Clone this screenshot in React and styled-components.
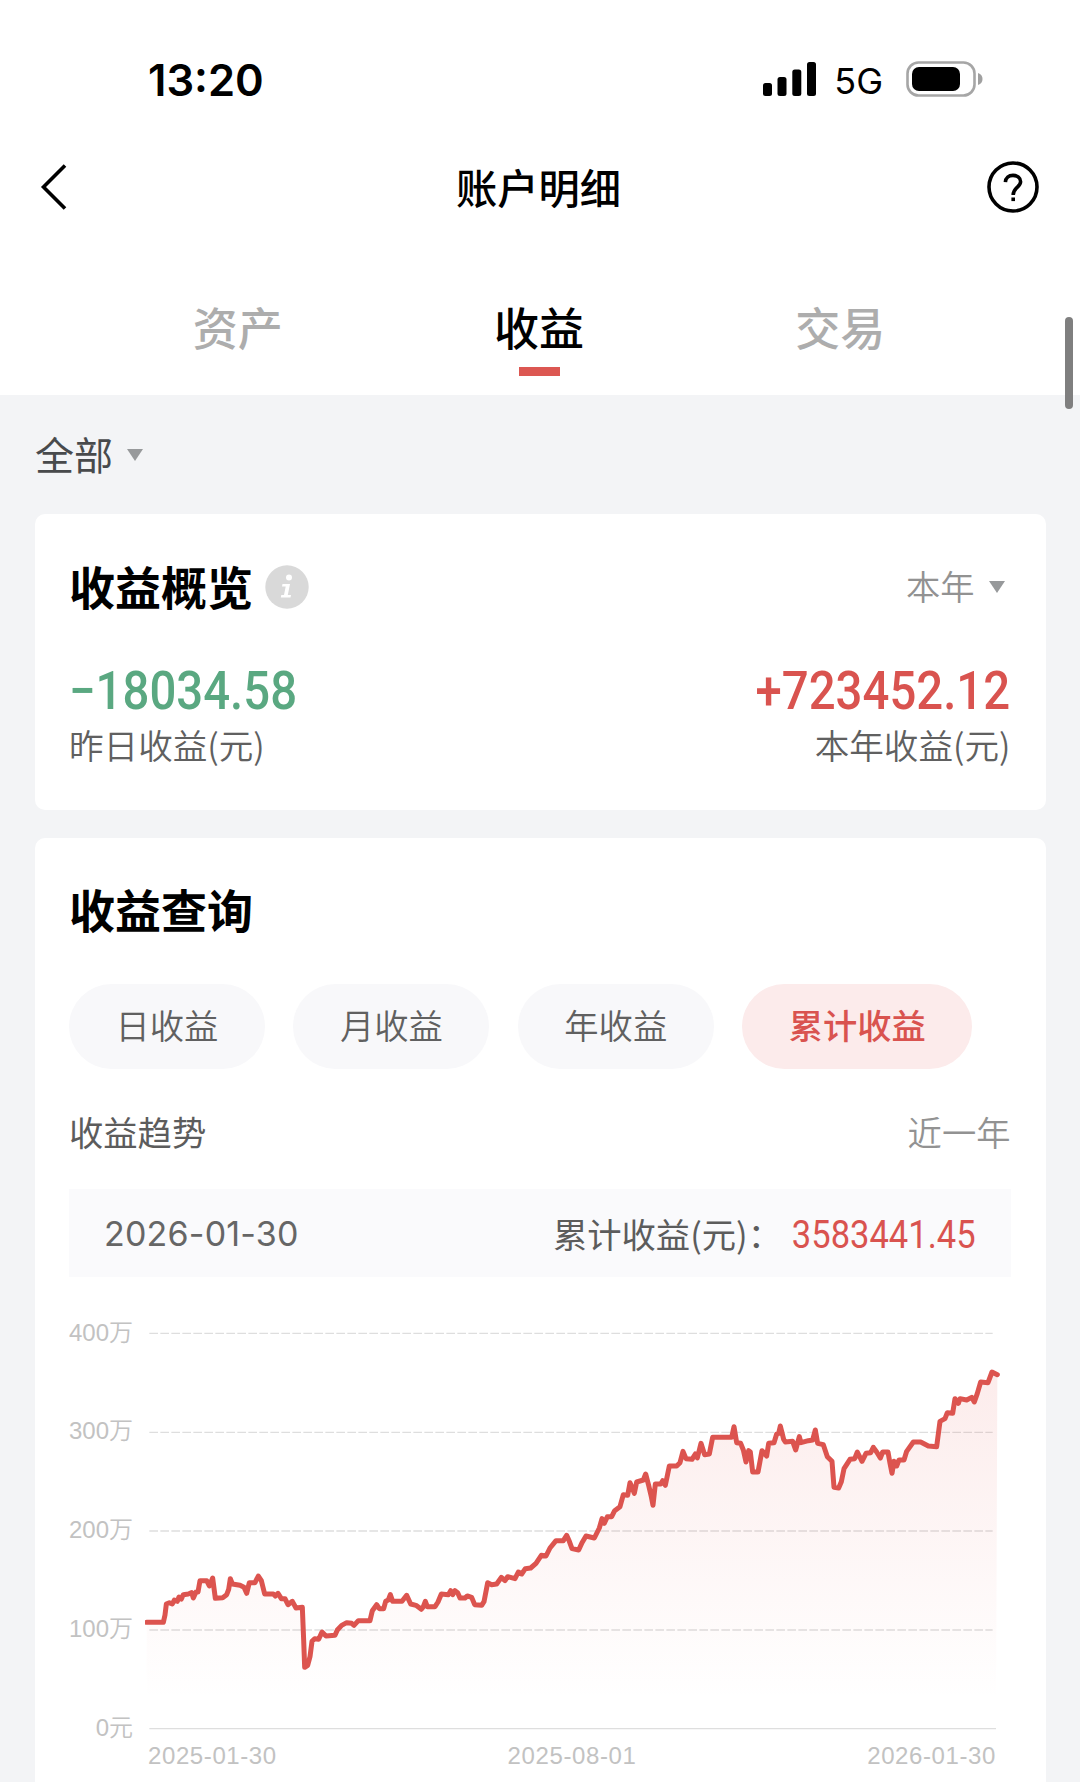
import React, { useState } from 'react';
import styled, { createGlobalStyle } from 'styled-components';

const tabs = ['资产', '收益', '交易'];
const periods = ['日收益', '月收益', '年收益', '累计收益'];
const yLabels = ['400万', '300万', '200万', '100万', '0元'];
const xLabels = ['2025-01-30', '2025-08-01', '2026-01-30'];
const gridLines = [100, 397, 693, 990];

// x,y pairs in the units of the chart viewBox
const trend = `320,967 370,967 375,945 379,912 388,908 397,912 403,900 412,904 417,891 424,897
430,884 445,882 455,878 460,894 468,876 474,876 480,842 500,842 508,858 518,834 526,895 548,893
560,884 566,868 571,836 577,852 600,856 612,862 620,880 628,848 645,848 655,828 664,842 674,882
700,882 706,888 714,880 724,896 735,896 744,914 757,904 768,924 787,922 791,1020 794,1102
803,1096 810,1070 816,1024 824,1016 836,1018 846,996 858,1008 885,1006 892,990 905,976 920,968
935,970 942,976 955,962 990,962 997,932 1010,914 1018,926 1031,926 1037,904 1045,900 1051,884
1058,904 1086,904 1100,886 1112,912 1128,916 1144,928 1150,920 1156,904 1162,920 1185,920
1194,906 1204,882 1225,884 1232,872 1238,884 1245,872 1253,878 1260,894 1275,894 1282,888
1295,892 1304,914 1325,916 1332,905 1343,848 1355,854 1370,852 1384,832 1395,842 1403,830
1425,836 1435,816 1445,822 1456,806 1472,804 1488,790 1504,766 1518,768 1530,744 1548,722
1570,722 1580,706 1588,724 1596,746 1616,750 1626,728 1638,708 1663,714 1678,684 1686,656
1693,670 1702,650 1715,650 1724,632 1740,620 1750,584 1763,586 1770,548 1783,580 1790,546
1810,540 1817,522 1826,556 1834,590 1839,616 1846,552 1862,552 1868,542 1876,556 1888,498
1910,498 1920,488 1929,454 1938,476 1956,478 1966,462 1972,474 1983,430 1994,464 2008,462
2018,412 2075,412 2082,380 2090,428 2102,430 2110,450 2118,486 2126,452 2131,456 2138,516
2154,516 2166,452 2180,468 2186,430 2202,428 2210,402 2216,400 2221,378 2231,418 2236,426
2258,424 2267,450 2278,410 2283,428 2305,422 2318,420 2326,390 2333,430 2350,434 2362,470
2376,484 2382,562 2396,564 2404,545 2412,506 2430,478 2444,476 2452,456 2466,484 2478,460
2492,458 2500,442 2510,456 2521,474 2528,456 2544,456 2550,490 2556,520 2562,484 2570,498
2577,480 2592,480 2600,454 2620,426 2642,426 2665,438 2690,440 2700,364 2715,356 2722,338
2738,340 2745,296 2755,310 2760,296 2780,300 2795,292 2803,306 2812,280 2822,246 2844,248
2856,216 2872,224`;

function App() {
  const [tab, setTab] = useState('收益');
  const [period, setPeriod] = useState('累计收益');

  return (
    <Page>
      <GlobalStyle />
      <StatusBar>
        <Time>13:20</Time>
        <StatusIcons>
          <svg width="53" height="34" viewBox="0 0 53 34">
            <rect x="0" y="21" width="9" height="13" rx="2.5" />
            <rect x="14.5" y="15" width="9" height="19" rx="2.5" />
            <rect x="29.3" y="7.5" width="9" height="26.5" rx="2.5" />
            <rect x="44" y="0" width="9" height="34" rx="2.5" />
          </svg>
          <Network>5G</Network>
          <svg width="77" height="36" viewBox="0 0 77 36">
            <rect x="1.5" y="1.5" width="67" height="33" rx="11" fill="none" stroke="#a6a6a6" strokeWidth="2.6" />
            <rect x="6" y="6" width="48" height="24" rx="7" />
            <path d="M72 12 q4.5 1.5 4.5 6 t-4.5 6 z" fill="#a0a0a0" />
          </svg>
        </StatusIcons>
      </StatusBar>

      <Header>
        <IconButton aria-label="返回">
          <svg width="28" height="48" viewBox="0 0 28 48" fill="none" stroke="#000" strokeWidth="3.6">
            <path d="M25 2.5 L3.5 24 L25 45.5" />
          </svg>
        </IconButton>
        <Title>账户明细</Title>
        <IconButton aria-label="帮助">
          <svg width="52" height="52" viewBox="0 0 52 52" fill="none" stroke="#000" strokeWidth="3.6">
            <circle cx="26" cy="26" r="24" />
            <path d="M18.4 21.2 C18.6 16.6 21.8 14.4 26 14.4 C30.4 14.4 33.6 17 33.6 20.8 C33.6 26 26.2 26.6 26.2 34" />
            <path d="M26.2 36.5 v3.6" />
          </svg>
        </IconButton>
      </Header>

      <Tabs>
        {tabs.map((name) => (
          <Tab key={name} $active={name === tab} onClick={() => setTab(name)}>{name}</Tab>
        ))}
      </Tabs>

      <Filter>
        全部
        <Caret />
      </Filter>

      <Overview>
        <CardHead>
          <CardTitle>收益概览</CardTitle>
          <Info width="44" height="44" viewBox="0 0 44 44">
            <circle cx="22" cy="22" r="21.7" fill="#d9d9d9" />
            <circle cx="24" cy="12.5" r="3" fill="#fff" />
            <path d="M17.5 19 H25 L22.8 30 H26 L25.5 32.5 H15.8 L16.3 30 H19 L20.7 21.5 H17 Z" fill="#fff" />
          </Info>
          <Range>
            本年
            <Caret $low />
          </Range>
        </CardHead>
        <Figures>
          <Figure>
            <Amount $color="#5aa881">−18034.58</Amount>
            <Label>昨日收益(元)</Label>
          </Figure>
          <Figure $right>
            <Amount $color="#d9534f" $right>+723452.12</Amount>
            <Label>本年收益(元)</Label>
          </Figure>
        </Figures>
      </Overview>

      <Query>
        <CardTitle>收益查询</CardTitle>
        <Pills>
          {periods.map((name) => (
            <Pill key={name} $active={name === period} onClick={() => setPeriod(name)}>{name}</Pill>
          ))}
        </Pills>
        <TrendHead>
          <TrendTitle>收益趋势</TrendTitle>
          <TrendRange>近一年</TrendRange>
        </TrendHead>
        <Selected>
          <SelectedDate>2026-01-30</SelectedDate>
          <SelectedLabel>累计收益(元)：</SelectedLabel>
          <SelectedValue>3583441.45</SelectedValue>
        </Selected>
        <Chart>
          <YAxis>
            {yLabels.map((label) => <span key={label}>{label}</span>)}
          </YAxis>
          <Plot viewBox="315 60 2583 1242">
            <defs>
              <linearGradient id="fade" gradientUnits="userSpaceOnUse" x1="0" y1="210" x2="0" y2="1200">
                <stop offset="0" stopColor="#e4504a" stopOpacity="0.11" />
                <stop offset="1" stopColor="#e4504a" stopOpacity="0" />
              </linearGradient>
            </defs>
            {gridLines.map((y) => (
              <line key={y} x1="328" x2="2858" y1={y} y2={y} stroke="#dedede" strokeWidth="4" strokeDasharray="26 7" />
            ))}
            <line x1="328" x2="2868" y1="1286" y2="1286" stroke="#dedede" strokeWidth="4" />
            <polygon points={`320,1286 ${trend} 2868,1286`} fill="url(#fade)" />
            <polyline points={trend} fill="none" stroke="#dc544f" strokeWidth="15" strokeLinejoin="round" strokeLinecap="round" />
          </Plot>
          <XAxis>
            {xLabels.map((label) => <span key={label}>{label}</span>)}
          </XAxis>
        </Chart>
      </Query>
      <ScrollThumb />
    </Page>
  );
}

export default App;

const GlobalStyle = createGlobalStyle`
  body {
    margin: 0;
    background: #f3f4f6;
  }

  button {
    border: 0;
    padding: 0;
    background: none;
    font: inherit;
  }

  svg {
    display: block;
  }
`

const Page = styled.div`
  position: relative;
  width: 1080px;
  height: 1782px;
  overflow: hidden;
  background: #f3f4f6;
  font-family: "Noto Sans CJK SC", sans-serif;
  color: #000;
`

const StatusBar = styled.div`
  box-sizing: border-box;
  height: 118px;
  padding: 40px 97px 0 148px;
  display: flex;
  align-items: center;
  justify-content: space-between;
  background: #fff;
`

const Time = styled.div`
  font: 600 43.5px/60px Inter, sans-serif;
  padding-top: 2px;
`

const StatusIcons = styled.div`
  display: flex;
  align-items: center;
`

const Network = styled.div`
  font: 400 36px/50px Inter, sans-serif;
  margin: 4px 23px 0 18px;
`

const Header = styled.div`
  box-sizing: border-box;
  height: 138px;
  padding: 0 41px 0 40px;
  display: flex;
  align-items: center;
  justify-content: space-between;
  background: #fff;
`

const IconButton = styled.button`
  width: 52px;
  display: flex;
`

const Title = styled.div`
  font-size: 41.3px;
  line-height: 60px;
  font-weight: 500;
  padding: 0 2px 3px 0;
`

const Tabs = styled.div`
  box-sizing: border-box;
  height: 139px;
  padding: 41px 89px 0 87px;
  display: flex;
  background: #fff;
`

const Tab = styled.button`
  flex: 1;
  display: flex;
  flex-direction: column;
  align-items: center;
  font-size: 45px;
  line-height: 60px;
  font-weight: 500;
  color: ${(props) => (props.$active ? '#000' : '#adadad')};

  &::after {
    content: '';
    width: 41px;
    height: 9px;
    margin: 10px 0 0 2px;
    background: ${(props) => (props.$active ? '#dc5752' : 'transparent')};
  }
`

const Filter = styled.div`
  height: 119px;
  padding-left: 35px;
  display: flex;
  align-items: center;
  gap: 14px;
  font-size: 39px;
  line-height: 56px;
  color: #484a4c;
  box-sizing: border-box;
  padding-bottom: 3px;
`

const Caret = styled.span`
  margin-top: ${(props) => (props.$low ? '4px' : '3px')};
  border: 8px solid transparent;
  border-top: 12px solid #97999b;
  border-bottom: 0;
`

const Card = styled.div`
  box-sizing: border-box;
  width: 1011px;
  margin-left: 34.5px;
  padding: 0 35px 0 34.5px;
  border-radius: 10px;
  background: #fff;
`

const Overview = styled(Card)`
  height: 296px;
  padding-top: 41px;
  margin-bottom: 28px;
`

const Query = styled(Card)`
  height: 960px;
  padding-top: 40px;
`

const CardHead = styled.div`
  display: flex;
  align-items: center;
`

const CardTitle = styled.div`
  font-size: 46px;
  line-height: 60px;
  font-weight: 700;
`

const Info = styled.svg`
  margin: 4px 0 0 12px;
`

const Range = styled.div`
  margin-left: auto;
  padding-right: 6px;
  display: flex;
  align-items: center;
  gap: 14px;
  font-size: 34.3px;
  font-weight: 350;
  color: #929292;
`

const Figures = styled.div`
  margin-top: 48px;
  display: flex;
  justify-content: space-between;
`

const Figure = styled.div`
  display: flex;
  flex-direction: column;
  align-items: ${(props) => (props.$right ? 'flex-end' : 'flex-start')};
`

const Amount = styled.div`
  font: 500 53px/56px Roboto, sans-serif;
  color: ${(props) => props.$color};
  transform: scaleX(0.893);
  transform-origin: ${(props) => (props.$right ? 'right' : 'left')};
`

const Label = styled.div`
  font-size: 34.6px;
  line-height: 50px;
  font-weight: 350;
  color: #606060;
`

const Pills = styled.div`
  margin-top: 46px;
  display: flex;
  gap: 28.5px;
`

const Pill = styled.button`
  height: 85px;
  padding: 0 46.5px 6px;
  border-radius: 43px;
  font-size: 34.3px;
  font-weight: ${(props) => (props.$active ? 500 : 350)};
  color: ${(props) => (props.$active ? '#d9534f' : '#606060')};
  background: ${(props) => (props.$active ? '#fcebeb' : '#f8f8fa')};
`

const TrendHead = styled.div`
  margin-top: 37px;
  display: flex;
  justify-content: space-between;
  font-size: 34.3px;
  line-height: 50px;
`

const TrendTitle = styled.div`
  color: #5c5c5c;
`

const TrendRange = styled.div`
  font-weight: 350;
  color: #929292;
`

const Selected = styled.div`
  height: 88px;
  margin-top: 33px;
  padding: 0 35px 0 35px;
  display: flex;
  align-items: center;
  background: #fafafc;
`

const SelectedDate = styled.div`
  font: 400 34px/50px Inter, sans-serif;
  letter-spacing: 0.2px;
  padding-top: 2px;
  color: #666;
`

const SelectedLabel = styled.div`
  margin-left: auto;
  margin-right: -14px;
  font-size: 34.3px;
  line-height: 50px;
  color: #5c5c5c;
`

const SelectedValue = styled.div`
  font: 400 39px/50px Roboto, sans-serif;
  padding-top: 4px;
  color: #d9534f;
  transform: scaleX(0.885);
  transform-origin: right;
`

const Chart = styled.div`
  margin-top: 42.5px;
  display: grid;
  grid-template-columns: 64px 861px;
  column-gap: 12px;
  font: 24px/30px "Liberation Sans", "Noto Sans CJK SC", sans-serif;
  font-weight: 350;
  color: #c2c2c2;
`

const YAxis = styled.div`
  height: 425px;
  margin: -2px 0 -12px;
  display: flex;
  flex-direction: column;
  justify-content: space-between;
  align-items: flex-end;
  white-space: nowrap;
`

const Plot = styled.svg`
  width: 861px;
  height: 414px;
`

const XAxis = styled.div`
  grid-column: 2;
  margin-top: 7px;
  padding: 0 10px 0 3px;
  display: flex;
  justify-content: space-between;
  letter-spacing: 0.6px;
`

// floats over the page edge like the native indicator
const ScrollThumb = styled.div`
  position: absolute;
  top: 317px;
  right: 7px;
  width: 8px;
  height: 92px;
  border-radius: 4px;
  background: #7f7f7f;
`
